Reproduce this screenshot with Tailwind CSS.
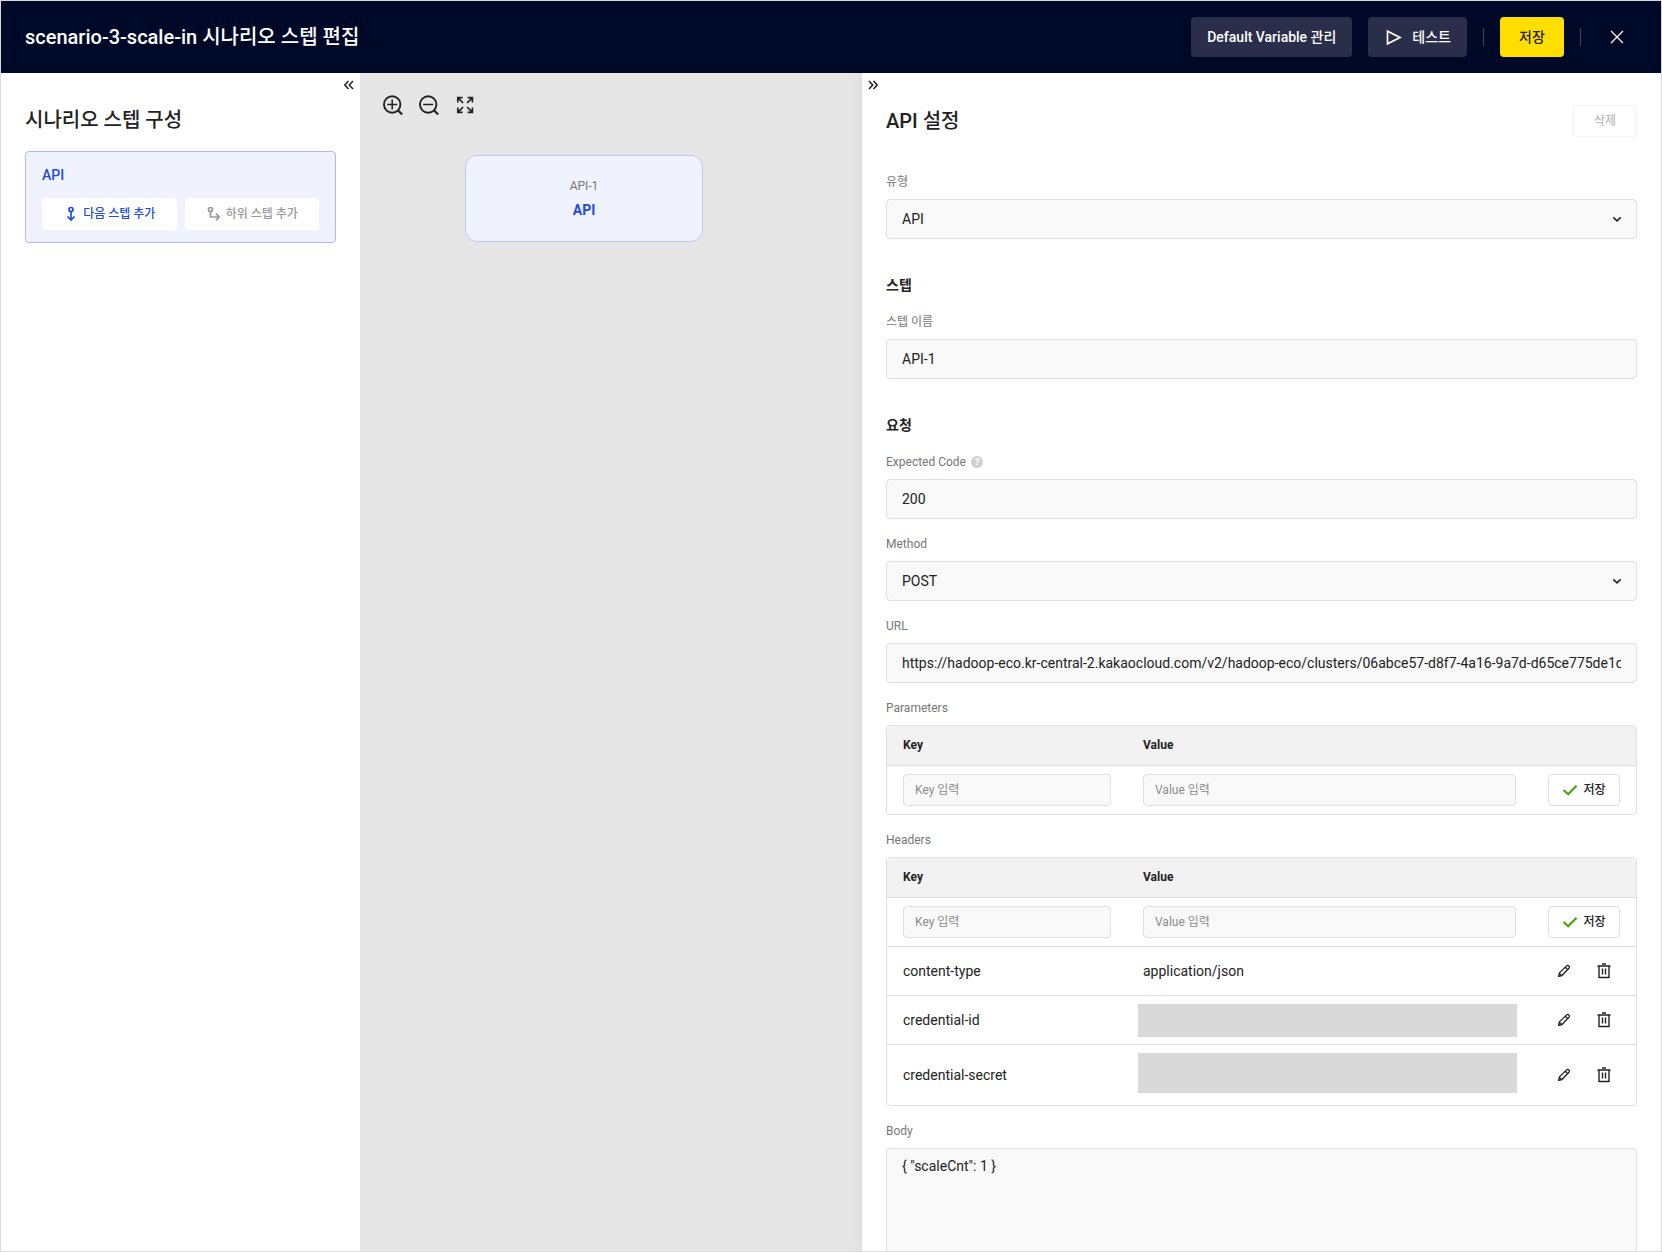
<!DOCTYPE html>
<html lang="ko">
<head>
<meta charset="utf-8">
<meta name="viewport" content="width=device-width, initial-scale=1">
<title>시나리오 스텝 편집</title>
<script src="https://cdn.jsdelivr.net/npm/@tailwindcss/browser@4"></script>
</head>
<body class="font-['Roboto','Noto_Sans_CJK_KR',sans-serif] text-[#222]">
<svg class="hidden" aria-hidden="true">
  <symbol id="check" viewBox="0 0 16 16"><path d="M1.500 8 6.200 12.300 14.500 3.800" fill="none" stroke="#4aa80e" stroke-width="2.200"/></symbol>
  <symbol id="chevron" viewBox="0 0 16 16"><path d="M4.300 6.400 8 9.800l3.700-3.400" fill="none" stroke="#222" stroke-width="1.600"/></symbol>
  <symbol id="pencil" viewBox="0 0 16 16"><path d="M2.600 13.400 3.400 9.900 10.600 2.900Q11.700 1.900 12.800 3 14 4.200 13 5.300L6 12.500ZM9.300 4.200 11.800 6.700M3.300 10.100 5.800 12.600" fill="none" stroke="#222" stroke-width="1.300" stroke-linejoin="round"/></symbol>
  <symbol id="trash" viewBox="0 0 16 16"><path d="M1.500 3h13M6 1h4M3 3v11.500h10V3M6.500 5.500v6M9.500 5.500v6" fill="none" stroke="#222" stroke-width="1.400"/></symbol>
</svg>
<div class="flex h-screen flex-col overflow-hidden border border-[#d9d9d9] bg-white">
  <header class="flex h-[72px] shrink-0 items-center justify-between bg-[#000828] px-6 text-white">
    <h1 class="text-xl font-medium">scenario-3-scale-in 시나리오 스텝 편집</h1>
    <div class="flex items-center gap-4 text-sm font-medium">
      <button type="button" class="h-10 rounded bg-[#2a2e4b] px-4">Default Variable 관리</button>
      <button type="button" class="flex h-10 items-center gap-2 rounded bg-[#2a2e4b] px-4">
        <svg class="size-5" viewBox="0 0 20 20" aria-hidden="true"><path d="M3.500 4.200v12.600L16 10.500Z" fill="none" stroke="currentColor" stroke-width="1.700"/></svg>
        테스트
      </button>
      <span class="h-[18px] w-px bg-white/25"></span>
      <button type="button" class="h-10 w-16 rounded bg-[#ffde00] text-[#222]">저장</button>
      <span class="h-[18px] w-px bg-white/25"></span>
      <button type="button" class="flex size-10 items-center justify-center" aria-label="닫기">
        <svg class="size-4" viewBox="0 0 16 16" aria-hidden="true"><path d="m2 2 12 12M14 2 2 14" fill="none" stroke="currentColor" stroke-width="1.300"/></svg>
      </button>
    </div>
  </header>

  <div class="flex min-h-0 flex-1">
    <aside class="w-[359px] shrink-0 bg-white">
      <div class="flex h-6 justify-end pr-1">
        <button type="button" class="flex size-4 translate-y-1 items-center justify-center" aria-label="왼쪽 패널 접기">
          <svg class="size-4" viewBox="0 0 16 16" aria-hidden="true"><path d="M8.500 4 4.800 8l3.700 4M13 4 9.300 8l3.700 4" fill="none" stroke="#222" stroke-width="1.500"/></svg>
        </button>
      </div>
      <div class="px-6 pt-2">
        <h2 class="text-xl leading-[30px] font-medium">시나리오 스텝 구성</h2>
        <section class="mt-4 rounded border border-[#acb9fa] bg-[#f0f3fd] px-4 py-3">
          <h3 class="text-sm leading-[22px] font-medium text-[#1e4be0]">API</h3>
          <div class="mt-3 grid grid-cols-2 gap-2 text-xs font-medium">
            <button type="button" class="flex h-8 items-center justify-center gap-1 rounded bg-white text-[#1e4be0]">
              <svg class="size-4" viewBox="0 0 16 16" aria-hidden="true" fill="none" stroke="currentColor" stroke-width="1.700"><circle cx="8" cy="3.500" r="2"/><path d="M8 5.500V14M4.500 10.500 8 14l3.500-3.500"/></svg>
              다음 스텝 추가
            </button>
            <button type="button" disabled class="flex h-8 items-center justify-center gap-1 rounded bg-white text-[#999]">
              <svg class="size-4" viewBox="0 0 16 16" aria-hidden="true" fill="none" stroke="currentColor" stroke-width="1.700"><circle cx="4.500" cy="3.500" r="2"/><path d="M4.500 5.500V11H13M10 7.700 13.200 11 10 14.300"/></svg>
              하위 스텝 추가
            </button>
          </div>
        </section>
      </div>
    </aside>

    <main class="relative flex-[502_1_0%] overflow-hidden bg-[#e6e6e6]">
      <div class="flex gap-3 px-5 pt-5">
        <button type="button" aria-label="확대"><svg class="size-6" viewBox="0 0 24 24" aria-hidden="true" fill="none" stroke="#222" stroke-width="1.900"><circle cx="12.200" cy="11.500" r="8.200"/><path d="m17.900 17.300 4.300 4.200" stroke-width="2.200"/><path d="M7.200 11.500h10M12.200 6.500v10" stroke-width="1.500"/></svg></button>
        <button type="button" aria-label="축소"><svg class="size-6" viewBox="0 0 24 24" aria-hidden="true" fill="none" stroke="#222" stroke-width="1.900"><circle cx="12.200" cy="11.500" r="8.200"/><path d="m17.900 17.300 4.300 4.200" stroke-width="2.200"/><path d="M7.200 11.500h10" stroke-width="1.500"/></svg></button>
        <button type="button" aria-label="화면 맞춤"><svg class="size-6" viewBox="0 0 24 24" aria-hidden="true" fill="none" stroke="#222" stroke-width="1.700"><path d="M5.800 9.500V4.700h4.800M5.800 4.700l5.300 5.300M15.600 4.700h4.800v4.800M20.400 4.700 15.100 10M5.800 14.500v4.800h4.800M5.800 19.300l5.300-5.300M15.600 19.300h4.800v-4.800M20.400 19.300 15.100 14"/></svg></button>
      </div>
      <div class="absolute top-[82px] left-[105px] flex h-[87px] w-[238px] flex-col items-center justify-center rounded-xl border border-[#bcc6fb] bg-[#f0f3fd] pb-px">
        <span class="text-xs leading-6 text-[#777]">API-1</span>
        <span class="text-sm leading-6 font-bold text-[#1e4be0]">API</span>
      </div>
    </main>

    <section class="relative flex-[799_1_0%] overflow-y-auto bg-white shadow-[0_0_14px_rgba(0,0,0,0.08)] [clip-path:inset(0_0_0_-16px)] [scrollbar-width:none]">
      <div class="flex h-6 pl-[3px]">
        <button type="button" class="flex size-4 translate-y-1 items-center justify-center" aria-label="오른쪽 패널 접기">
          <svg class="size-4" viewBox="0 0 16 16" aria-hidden="true"><path d="M4 4 7.700 8 4 12M8.500 4l3.700 4-3.700 4" fill="none" stroke="#222" stroke-width="1.500"/></svg>
        </button>
      </div>
      <form class="px-6 pt-2 pb-6">
        <div class="flex items-center justify-between">
          <h2 class="text-xl leading-8 font-medium">API 설정</h2>
          <button type="button" disabled class="h-8 w-16 rounded border border-[#f3f3f3] text-xs font-medium text-[#bbb]">삭제</button>
        </div>

        <label for="type" class="mt-9 block text-xs leading-[18px] text-[#777]">유형</label>
        <div class="relative mt-2">
          <select id="type" class="block h-10 w-full appearance-none rounded border border-[#dfdfe4] bg-[#f9f9f9] px-[15px] text-sm"><option>API</option></select>
          <svg class="pointer-events-none absolute top-3 right-3 size-4" aria-hidden="true"><use href="#chevron"/></svg>
        </div>

        <h3 class="mt-9 text-sm leading-5 font-bold">스텝</h3>
        <label for="step-name" class="mt-[18px] block text-xs leading-[18px] text-[#777]">스텝 이름</label>
        <input id="step-name" type="text" value="API-1" class="mt-2 block h-10 w-full rounded border border-[#dfdfe4] bg-[#f9f9f9] px-[15px] text-sm">

        <h3 class="mt-9 text-sm leading-5 font-bold">요청</h3>
        <div class="mt-[18px] flex items-center gap-[5px]">
          <label for="code" class="text-xs leading-[18px] text-[#777]">Expected Code</label>
          <button type="button" class="size-3 rounded-full bg-[#d0d0d0] text-[9px] leading-3 font-bold text-white" aria-label="도움말">?</button>
        </div>
        <input id="code" type="text" value="200" class="mt-2 block h-10 w-full rounded border border-[#dfdfe4] bg-[#f9f9f9] px-[15px] text-sm">

        <label for="method" class="mt-4 block text-xs leading-[18px] text-[#777]">Method</label>
        <div class="relative mt-2">
          <select id="method" class="block h-10 w-full appearance-none rounded border border-[#dfdfe4] bg-[#f9f9f9] px-[15px] text-sm"><option>POST</option></select>
          <svg class="pointer-events-none absolute top-3 right-3 size-4" aria-hidden="true"><use href="#chevron"/></svg>
        </div>

        <label for="url" class="mt-4 block text-xs leading-[18px] text-[#777]">URL</label>
        <input id="url" type="text" value="https://hadoop-eco.kr-central-2.kakaocloud.com/v2/hadoop-eco/clusters/06abce57-d8f7-4a16-9a7d-d65ce775de1d" class="mt-2 block h-10 w-full rounded border border-[#dfdfe4] bg-[#f9f9f9] px-[15px] text-sm">

        <h4 id="params" class="mt-4 text-xs leading-[18px] text-[#777]">Parameters</h4>
        <div class="mt-2 overflow-hidden rounded border border-[#dfdfe1]">
          <table class="w-full table-fixed border-collapse text-left" aria-labelledby="params">
            <colgroup><col class="w-60"><col><col class="w-[104px]"></colgroup>
            <thead class="bg-[#f2f2f2] text-xs">
              <tr class="h-[39px]"><th class="px-4 font-bold">Key</th><th class="px-4 font-bold">Value</th><th></th></tr>
            </thead>
            <tbody>
              <tr class="h-[49px] border-t border-[#dfdfe1]">
                <td class="px-4"><input type="text" aria-label="Key" placeholder="Key 입력" class="block h-8 w-full rounded border border-[#dfdfe4] bg-[#f9f9f9] px-[11px] text-xs placeholder:text-[#8c8c8c]"></td>
                <td class="px-4"><input type="text" aria-label="Value" placeholder="Value 입력" class="block h-8 w-full rounded border border-[#dfdfe4] bg-[#f9f9f9] px-[11px] text-xs placeholder:text-[#8c8c8c]"></td>
                <td class="px-4"><button type="button" class="flex h-8 w-full items-center justify-center gap-[5px] rounded border border-[#dfdfe1] text-xs font-medium"><svg class="size-4" aria-hidden="true"><use href="#check"/></svg>저장</button></td>
              </tr>
            </tbody>
          </table>
        </div>

        <h4 id="headers" class="mt-4 text-xs leading-[18px] text-[#777]">Headers</h4>
        <div class="mt-2 overflow-hidden rounded border border-[#dfdfe1]">
          <table class="w-full table-fixed border-collapse text-left text-sm" aria-labelledby="headers">
            <colgroup><col class="w-60"><col><col class="w-[104px]"></colgroup>
            <thead class="bg-[#f2f2f2] text-xs">
              <tr class="h-[39px]"><th class="px-4 font-bold">Key</th><th class="px-4 font-bold">Value</th><th></th></tr>
            </thead>
            <tbody>
              <tr class="h-[49px] border-t border-[#dfdfe1]">
                <td class="px-4"><input type="text" aria-label="Key" placeholder="Key 입력" class="block h-8 w-full rounded border border-[#dfdfe4] bg-[#f9f9f9] px-[11px] text-xs placeholder:text-[#8c8c8c]"></td>
                <td class="px-4"><input type="text" aria-label="Value" placeholder="Value 입력" class="block h-8 w-full rounded border border-[#dfdfe4] bg-[#f9f9f9] px-[11px] text-xs placeholder:text-[#8c8c8c]"></td>
                <td class="px-4"><button type="button" class="flex h-8 w-full items-center justify-center gap-[5px] rounded border border-[#dfdfe1] text-xs font-medium"><svg class="size-4" aria-hidden="true"><use href="#check"/></svg>저장</button></td>
              </tr>
              <tr class="h-[49px] border-t border-[#dfdfe1]">
                <td class="px-4">content-type</td>
                <td class="px-4">application/json</td>
                <td class="px-4"><div class="flex gap-2"><button type="button" class="flex size-8 items-center justify-center" aria-label="수정"><svg class="size-4" aria-hidden="true"><use href="#pencil"/></svg></button><button type="button" class="flex size-8 items-center justify-center" aria-label="삭제"><svg class="size-4" aria-hidden="true"><use href="#trash"/></svg></button></div></td>
              </tr>
              <tr class="h-[49px] border-t border-[#dfdfe1]">
                <td class="px-4">credential-id</td>
                <td class="pt-2 pr-[15px] pl-[11px] align-top"><div class="h-[33px] bg-[#d9d9d9]"></div></td>
                <td class="px-4"><div class="flex gap-2"><button type="button" class="flex size-8 items-center justify-center" aria-label="수정"><svg class="size-4" aria-hidden="true"><use href="#pencil"/></svg></button><button type="button" class="flex size-8 items-center justify-center" aria-label="삭제"><svg class="size-4" aria-hidden="true"><use href="#trash"/></svg></button></div></td>
              </tr>
              <tr class="h-[61px] border-t border-[#dfdfe1]">
                <td class="px-4">credential-secret</td>
                <td class="pt-2 pr-[15px] pl-[11px] align-top"><div class="h-10 bg-[#d9d9d9]"></div></td>
                <td class="px-4"><div class="flex gap-2"><button type="button" class="flex size-8 items-center justify-center" aria-label="수정"><svg class="size-4" aria-hidden="true"><use href="#pencil"/></svg></button><button type="button" class="flex size-8 items-center justify-center" aria-label="삭제"><svg class="size-4" aria-hidden="true"><use href="#trash"/></svg></button></div></td>
              </tr>
            </tbody>
          </table>
        </div>

        <label for="body" class="mt-4 block text-xs leading-[18px] text-[#777]">Body</label>
        <textarea id="body" class="mt-2 block h-60 w-full resize-none rounded border border-[#dfdfe4] bg-[#f9f9f9] px-[15px] py-[7px] text-sm">{ "scaleCnt": 1 }</textarea>
      </form>
    </section>
  </div>
</div>
</body>
</html>
